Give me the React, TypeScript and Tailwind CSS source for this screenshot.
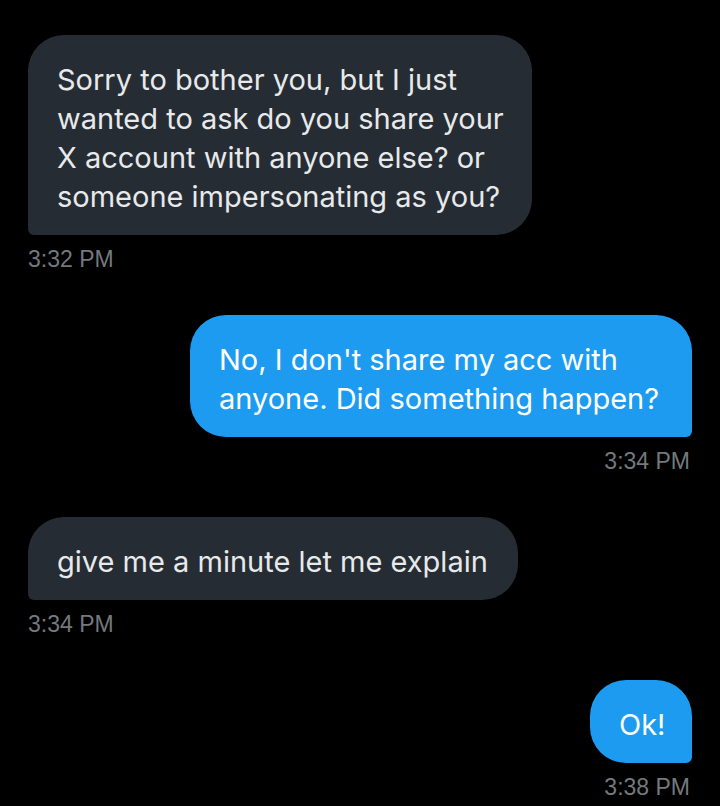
import React from "react";

const bubbleText = "font-['Inter',sans-serif] text-[29px] leading-[39px] whitespace-nowrap";
const stamp = "font-['Liberation_Sans',Arial,sans-serif] text-[23px] leading-[28px] text-[#74797e] mt-[10px]";

function Received({ lines, width }: { lines: string[]; width: number }) {
  return (
    <div className="flex flex-col items-start">
      <div
        className={`bg-[#262c33] text-[#e7e9ea] rounded-[36px] rounded-bl-[6px] pl-[29px] pr-[20px] pt-[25px] pb-[19px] ${bubbleText}`}
        style={{ width }}
      >
        {lines.map((l, i) => (
          <div key={i}>{l}</div>
        ))}
      </div>
    </div>
  );
}

function Sent({ lines, width }: { lines: string[]; width: number }) {
  return (
    <div className="flex flex-col items-end">
      <div
        className={`bg-[#1d9bf0] text-white rounded-[36px] rounded-br-[6px] pl-[29px] pr-[20px] pt-[25px] pb-[19px] ${bubbleText}`}
        style={{ width }}
      >
        {lines.map((l, i) => (
          <div key={i}>{l}</div>
        ))}
      </div>
    </div>
  );
}

export default function App() {
  return (
    <div className="w-[720px] h-[806px] bg-black overflow-hidden px-[28px] pt-[35px] flex flex-col">
      <Received
        width={504}
        lines={[
          "Sorry to bother you, but I just",
          "wanted to ask do you share your",
          "X account with anyone else? or",
          "someone impersonating as you?",
        ]}
      />
      <div className={stamp}>3:32 PM</div>

      <div className="mt-[42px]">
        <Sent
          width={502}
          lines={["No, I don't share my acc with", "anyone. Did something happen?"]}
        />
      </div>
      <div className={`${stamp} text-right pr-[2px]`}>3:34 PM</div>

      <div className="mt-[42px]">
        <Received width={490} lines={["give me a minute let me explain"]} />
      </div>
      <div className={stamp}>3:34 PM</div>

      <div className="mt-[42px]">
        <Sent width={102} lines={["Ok!"]} />
      </div>
      <div className={`${stamp} text-right pr-[2px]`}>3:38 PM</div>
    </div>
  );
}
